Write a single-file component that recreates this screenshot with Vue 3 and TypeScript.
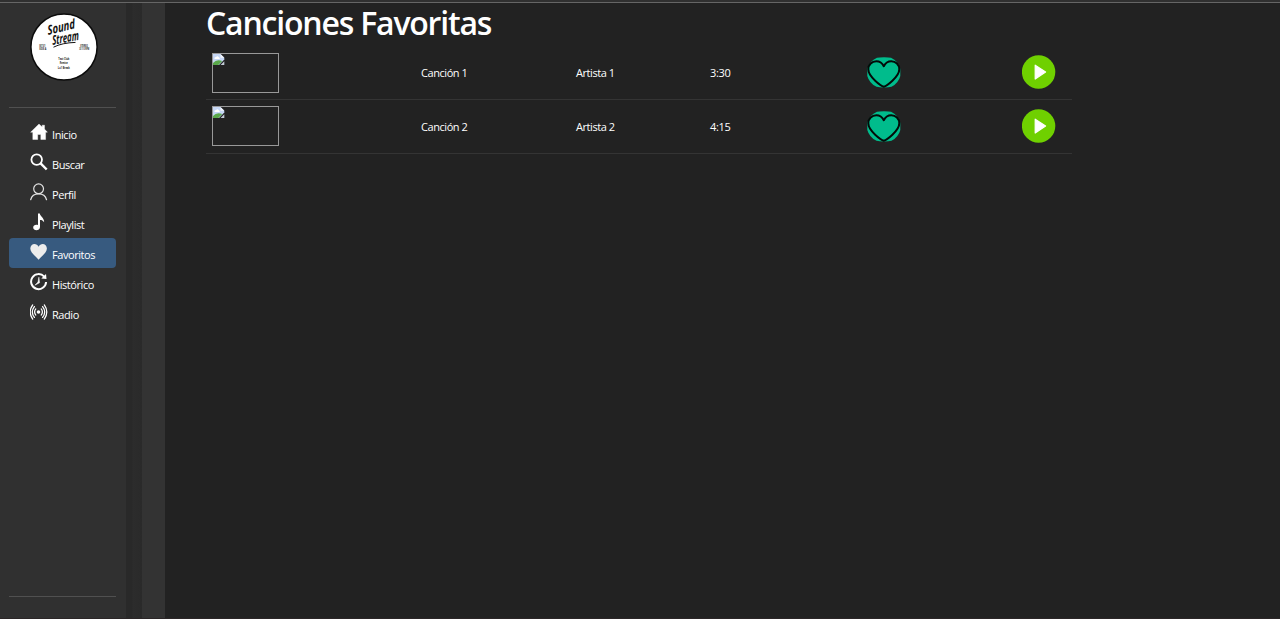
<script setup lang="ts">
interface Song {
  title: string
  artist: string
  duration: string
}

const menu: string[] = ['Inicio', 'Buscar', 'Perfil', 'Playlist', 'Favoritos', 'Histórico', 'Radio']
const active = 'Favoritos'

const songs: Song[] = [
  { title: 'Canción 1', artist: 'Artista 1', duration: '3:30' },
  { title: 'Canción 2', artist: 'Artista 2', duration: '4:15' },
]
</script>

<template>
  <div class="app">
    <div class="topbar"></div>
    <div class="body">
      <aside class="sidebar">
        <svg class="logo" viewBox="0 0 68 68">
          <circle cx="34" cy="34" r="33.1" fill="#fff" stroke="#0b0b0b" stroke-width="1.5" />
          <g class="script">
            <text transform="translate(18 22) rotate(-14) skewX(-8)" font-size="13" textLength="28" lengthAdjust="spacingAndGlyphs">Sound</text>
            <text transform="translate(22.5 32) rotate(-11) skewX(-8)" font-size="13" textLength="27" lengthAdjust="spacingAndGlyphs">Stream</text>
            <path d="M23.5 34.2 Q32 29.8 45.5 29.4" fill="none" stroke="#111" stroke-width="1" />
          </g>
          <g class="tiny">
            <text x="9.3" y="34.3" textLength="6" lengthAdjust="spacingAndGlyphs">SST 01</text>
            <text x="9.3" y="37.3" textLength="7" lengthAdjust="spacingAndGlyphs">SIDE A</text>
            <text x="50.3" y="34.3" textLength="7.5" lengthAdjust="spacingAndGlyphs">STEREO</text>
            <text x="49.3" y="37.3" textLength="10" lengthAdjust="spacingAndGlyphs">33 1/3 RPM</text>
            <text x="28.3" y="47.4" textLength="11" lengthAdjust="spacingAndGlyphs">Test Club</text>
            <text x="29.8" y="51.2" textLength="8" lengthAdjust="spacingAndGlyphs">Remixe</text>
            <text x="27.8" y="55.8" textLength="12" lengthAdjust="spacingAndGlyphs">Lo'l Break</text>
          </g>
        </svg>
        <hr class="rule" />
        <nav class="menu">
          <a v-for="item in menu" :key="item" class="item" :class="{ active: item === active }">
            <svg class="icon" viewBox="0 0 18 18">
              <template v-if="item === 'Inicio'">
                <path fill="#fff" d="M9 1 L12.2 4 V2.2 H14.5 V6.1 L17.4 9.2 H15.6 V16.5 H10.8 V11.5 H7.7 V16.5 H2.8 V9.2 H.6 Z" stroke="#fff" stroke-width=".4" stroke-linejoin="round" />
              </template>
              <template v-else-if="item === 'Buscar'">
                <circle cx="6.7" cy="6.6" r="5.3" fill="none" stroke="#fff" stroke-width="1.8" />
                <path d="M10.6 10.4 L16.7 16.5" stroke="#fff" stroke-width="2.4" />
              </template>
              <template v-else-if="item === 'Perfil'">
                <circle cx="8.6" cy="5.8" r="4.9" fill="none" stroke="#e4e4e4" stroke-width="1.2" />
                <path d="M.7 16.7 C1.7 12.5 5.1 10.8 8.6 10.8 S15.5 12.5 16.5 16.7" fill="none" stroke="#e4e4e4" stroke-width="1.3" stroke-linecap="round" />
              </template>
              <template v-else-if="item === 'Playlist'">
                <path fill="#fff" d="M8 .5 H9.8 C10 3.2 14.4 4.8 14.1 9.2 C12.8 7.2 11.5 6.8 10 6.9 V14 C9.8 18.2 3.2 18.1 3.2 14.5 C3.2 11.9 6 11.1 8 12.1 Z" />
              </template>
              <template v-else-if="item === 'Favoritos'">
                <path fill="#ececec" d="M8.6 16.8 C6.4 13.5 .3 10.2 .3 5.6 C.3 .2 6.7 -.6 8.6 3.8 C10.5 -.6 16.9 .2 16.9 5.6 C16.9 10.2 10.8 13.5 8.6 16.8 Z" />
              </template>
              <template v-else-if="item === 'Histórico'">
                <g transform="translate(-.4 0)">
                  <path d="M14.6 3.6 A7.5 7.5 0 1 0 16.5 9" fill="none" stroke="#fff" stroke-width="2" />
                  <path d="M11.7 5.4 L16.9 5.9 L16.4 1 Z" fill="#fff" />
                  <path d="M9.3 4.2 L10 9.8 L5.3 12.2 L8.4 9 Z" fill="#fff" stroke="#fff" stroke-width=".5" />
                </g>
              </template>
              <template v-else>
                <g transform="translate(-.5 0)">
                  <circle cx="9" cy="9" r="1.8" fill="#fff" />
                  <g fill="none" stroke="#fff" stroke-width="1.25" stroke-linecap="round">
                    <path d="M6.3 5.9 Q3.9 9 6.3 12.1 M11.7 5.9 Q14.1 9 11.7 12.1" />
                    <path d="M4.9 3.6 Q.7 9 4.9 14.4 M13.1 3.6 Q17.3 9 13.1 14.4" />
                    <path d="M3.2 1.9 Q-1.8 9 3.2 16.1 M14.8 1.9 Q19.8 9 14.8 16.1" />
                  </g>
                </g>
              </template>
            </svg>
            <span class="label">{{ item }}</span>
          </a>
        </nav>
        <hr class="rule" />
      </aside>
      <div class="gutter"></div>
      <div class="strip"></div>
      <main class="content">
        <h1 class="title">Canciones Favoritas</h1>
        <div class="songs">
          <div v-for="song in songs" :key="song.title" class="song">
            <div class="cover">
              <svg width="12" height="12" viewBox="0 0 12 12">
                <path d="M0 0 H7.5 L11.3 3.8 V5.4 L6 11 H0 Z" fill="#c6d7f5" />
                <path d="M7.5 0 V3.8 H11.3 Z" fill="#f4f7fc" />
                <path d="M1.5 5 Q1 3.1 3 3 Q4.6 1.2 5.8 3.2 Q7.4 3.6 6.6 5 Z" fill="#fff" />
                <path d="M0 11 V9 Q3.6 4.6 9.2 7 L5.4 11 Z" fill="#5aa84a" />
                <path d="M7.6 11 L11.3 7.2 V11 Z" fill="#c3cbd8" />
              </svg>
            </div>
            <span class="cell name">{{ song.title }}</span>
            <span class="cell artist">{{ song.artist }}</span>
            <span class="cell time">{{ song.duration }}</span>
            <svg class="heart" width="34" height="32" viewBox="0 0 34 32">
              <path d="M10 .8 Q12 .2 17 .2 Q22 .2 24 .8 A17 17 0 0 1 33.3 12 V19 A17 17 0 0 1 24.5 29.8 Q22 30.4 17 30.4 Q12 30.4 9.5 29.8 A17 17 0 0 1 .3 19 V12 A17 17 0 0 1 10 .8 Z" fill="#00bc8c" />
              <path d="M16.8 29.8 C14.5 29.2 1.3 20 1.3 12.3 C1.3 7.6 4.9 4.2 9.3 4.2 C12.4 4.2 15.2 5.8 16.8 9.2 C18.4 5.8 21.2 4.2 24.3 4.2 C28.7 4.2 32.3 7.6 32.3 12.3 C32.3 20 19.1 29.2 16.8 29.8 Z" fill="#00bc8c" stroke="#030b08" stroke-width="2" stroke-linejoin="round" />
            </svg>
            <svg class="play" width="34" height="34" viewBox="0 0 34 34">
              <circle cx="16.6" cy="17" r="16.7" fill="#6fd000" />
              <path d="M13.2 10.2 L23.6 17 L13.2 24 Z" fill="#fff" stroke="#fff" stroke-width="1.2" stroke-linejoin="round" />
            </svg>
          </div>
        </div>
      </main>
    </div>
    <div class="bottomline"></div>
  </div>
</template>

<style>
body {
  margin: 0;
  background: #222;
  overflow: hidden;
}
</style>

<style scoped>
.app {
  height: 619px;
  display: flex;
  flex-direction: column;
  color: #fff;
  font-family: "Open Sans", "Noto Sans", sans-serif;
}
.topbar {
  height: 2px;
  flex: none;
  background: #303030;
  border-bottom: 1px solid #666;
}
.body {
  flex: 1;
  display: flex;
  min-height: 0;
}
.bottomline {
  height: 1px;
  background: #2b2627;
}
.sidebar {
  box-sizing: border-box;
  width: 126px;
  padding: 10px 10px 21px 9px;
  background: #303030;
  display: flex;
  flex-direction: column;
}
.logo {
  width: 68px;
  height: 68px;
  flex: none;
  margin: 0 0 26px 21px;
}
.script {
  font-family: "Open Sans", sans-serif;
  font-weight: 700;
  font-style: italic;
  fill: #111;
}
.tiny {
  font-size: 2.6px;
  font-weight: 700;
  fill: #222;
}
.rule {
  width: 107px;
  height: 1px;
  flex: none;
  border: 0;
  margin: 0;
  background: #505050;
}
.menu {
  flex: 1;
  padding-top: 10px;
}
.item {
  box-sizing: border-box;
  width: 107px;
  height: 30px;
  padding-left: 21px;
  display: flex;
  border-radius: 4px;
}
.item.active {
  background: #375a7f;
}
.icon {
  width: 18px;
  height: 18px;
  margin-top: 5px;
}
.label {
  margin: 9px 0 0 4px;
  font-size: 11px;
  line-height: 16px;
  letter-spacing: -0.43px;
}
.gutter {
  width: 16px;
  background: linear-gradient(90deg, #292929 0, #292929 6px, #2c2c2c 7px, #2a2a2a 100%);
}
.strip {
  width: 23px;
  background: #333;
}
.content {
  flex: 1;
  padding-left: 41px;
  background: #222;
}
.title {
  margin: 0;
  height: 43px;
  font-size: 32px;
  line-height: 40px;
  font-weight: 600;
  letter-spacing: -1.2px;
  white-space: nowrap;
}
.songs {
  width: 866px;
}
.song {
  box-sizing: border-box;
  height: 54px;
  padding-left: 6px;
  display: grid;
  grid-template-columns: 209px 155px 134px 157px 155px 1fr;
  align-items: center;
  border-bottom: 1px solid #343434;
}
.song:last-child {
  padding-bottom: 1px;
}
.cover {
  box-sizing: border-box;
  width: 67px;
  height: 40px;
  border: 1px solid #999;
}
.cover svg {
  display: block;
}
.cell {
  padding-top: 1px;
  font-size: 11px;
  line-height: 16px;
  letter-spacing: -0.43px;
}
.time {
  letter-spacing: -0.3px;
}
.heart {
  margin-top: 1px;
}
.heart,
.play {
  display: block;
}
.play {
  margin-bottom: 1px;
}
</style>
